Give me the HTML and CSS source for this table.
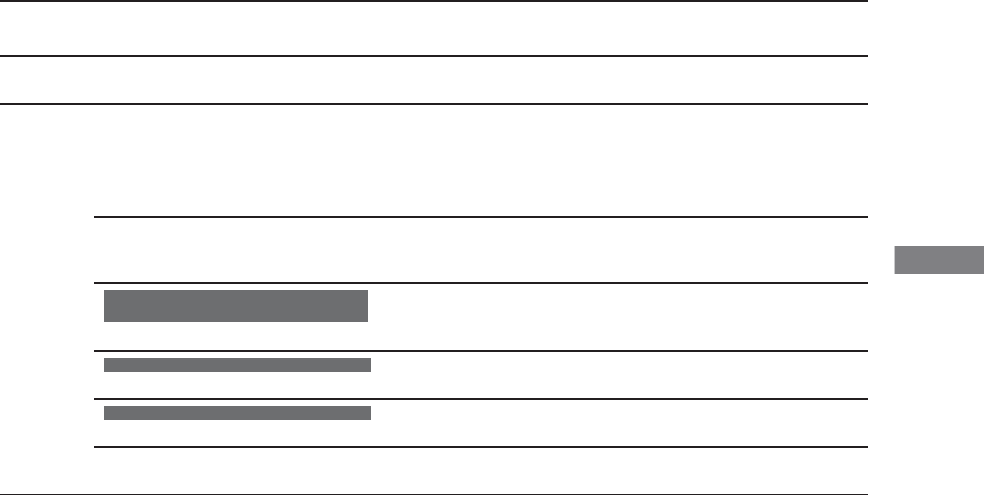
FILE: index.html
```html
<!DOCTYPE html>
<html>
<head>
<meta charset="utf-8">
<link rel="stylesheet" href="styles.css">
</head>
<body>
<div class="page">
  <div class="row row-top"></div>
  <div class="row row-second"></div>
  <div class="row row-intro"></div>
  <div class="table">
    <div class="trow trow-head"></div>
    <div class="trow trow-big"><div class="bar bar-big"></div></div>
    <div class="trow trow-small"><div class="bar bar-small"></div></div>
    <div class="trow trow-small"><div class="bar bar-small"></div></div>
    <div class="trow trow-small"></div>
  </div>
  <div class="row row-end"></div>
</div>
<div class="side-tab"></div>
</body>
</html>
```
FILE: styles.css
```css
* { box-sizing: border-box; }
html, body { margin: 0; padding: 0; background: #fff; font-family: "Liberation Sans", Arial, sans-serif; }
body { width: 984px; height: 495px; overflow: hidden; position: relative; }
.page { width: 868px; display: flex; flex-direction: column; }
.row { border-top: 2px solid #231f20; }
.row-top { height: 55px; }
.row-second { height: 48px; }
.row-intro { height: 113px; }
.row-end { height: 1px; }
.table { margin-left: 94px; display: flex; flex-direction: column; }
.trow { border-top: 2px solid #231f20; padding: 6px 0 0 10px; }
.trow-head { height: 66px; }
.trow-big { height: 68px; }
.trow-small { height: 48px; }
.bar { background: #6d6e70; }
.bar-big { width: 264px; height: 32px; }
.bar-small { width: 267px; height: 14px; }
.side-tab { position: absolute; left: 894px; top: 246px; width: 90px; height: 28px; background: #808083; border-left: 1px solid #c9c9cb; }
```
